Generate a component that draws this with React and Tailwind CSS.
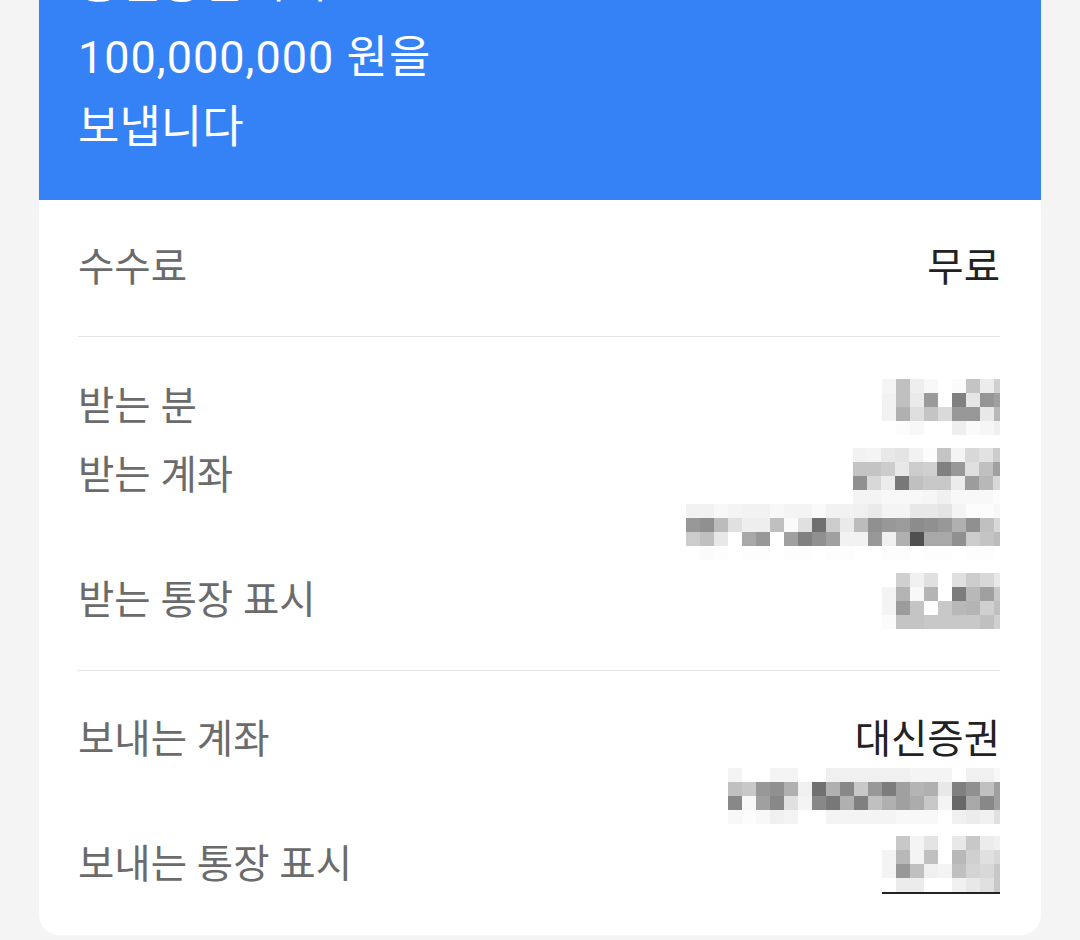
import React from 'react';

// gray values of the privacy mosaics, one string per row of 14px cells
const mosaics = {
  receiverName: {
    width: 118,
    rows: [
      'f5 c0 ee f8 ff fb c4 ec d0',
      'f2 c0 ea 9a ff 80 e6 95 a0',
      'f2 b0 de c4 da 98 98 e8 b8',
      'ff fc f8 ff ff ee fa f6 f0',
    ],
  },
  receiverBank: {
    width: 147,
    rows: [
      'f2 f4 e8 e4 f2 fc c4 f4 d8 e2 cc',
      'c4 c4 cc e8 cc d0 80 98 e0 c0 a0',
      '90 d8 ec 78 c0 c8 c8 ec 9c b8 d8',
      'f4 f4 f8 f8 f8 f6 f0 f8 f8 f8 fc',
    ],
  },
  receiverAccount: {
    width: 314,
    rows: [
      'f2 f2 f8 f4 f2 f2 f8 f4 f4 fa f2 f2 f0 ea f4 f4 e8 e8 e4 f4 fc fc f8',
      '98 90 bc e0 ee ee c0 fa e0 70 cc ea bc 90 98 9c 8c 90 98 b0 90 c0 d8',
      'cc c0 e8 ff a8 98 ff a0 80 90 a0 f2 f2 98 f0 b0 50 a8 a8 90 cc c4 bc',
      'ff fb fd ff fd fd ff fd fd ff fd fd ff ff fd fd ff fd fd ff fd fd ff',
    ],
  },
  receiverMemo: {
    width: 118,
    rows: [
      'ff d0 f0 e0 ff e0 cc d8 e8',
      'f4 b4 f8 b4 ff 7c b8 a0 c8',
      'f4 9c c4 ff c8 b8 b4 d0 c0',
      'fb c4 c4 c8 c8 c8 c8 c0 d0',
    ],
  },
  senderAccount: {
    width: 272,
    rows: [
      'f4 ff ff f4 f4 ff ff f0 f0 f0 f0 f0 f0 f4 f4 f4 ff f0 f0 f8',
      'c0 c8 98 90 b0 f0 70 b0 88 c8 98 7c a0 b4 b0 e8 80 90 c0 a0',
      '88 f8 a0 88 e0 f4 88 78 b0 80 c0 b0 a0 ac c8 f4 68 a8 88 a0',
      'f8 fc f8 f0 f4 ff ff f4 f4 f4 f4 f4 f8 f8 f8 ff f0 ec f0 e0',
    ],
  },
  senderMemo: {
    width: 118,
    rows: [
      'ff c8 f4 e4 ff e8 c8 ec f0',
      'f4 b8 f4 c0 ff b8 d0 e0 d8',
      'f4 98 c0 f0 f4 c0 d4 d8 c8',
      'ff ec ec ff ff f0 e8 e0 c8',
    ],
  },
};

const Mosaic = ({ name, underline }) => {
  const { width, rows } = mosaics[name];
  return (
    <div className="h-[56px] flex items-center justify-end">
      <div
        className={`overflow-hidden ${underline ? 'border-b-2 border-[#222222]' : ''}`}
        style={{ width }}
      >
        {rows.map((row, i) => (
          <div key={i} className="flex">
            {row.split(' ').map((g, j) => (
              <div
                key={j}
                className="w-[14px] h-[14px] shrink-0"
                style={{ backgroundColor: `#${g}${g}${g}` }}
              />
            ))}
          </div>
        ))}
      </div>
    </div>
  );
};

const Row = ({ label, children }) => (
  <div className="flex justify-between items-start">
    <div className="h-[56px] leading-[56px] text-[#6b6b6b]">{label}</div>
    <div className="flex flex-col items-end">{children}</div>
  </div>
);

const Value = ({ children }) => (
  <div className="h-[56px] leading-[56px] text-[#222222]">{children}</div>
);

export default function App() {
  return (
    <div
      className="h-[940px] overflow-hidden bg-[#f4f4f4] px-[39px]"
      style={{ fontFamily: 'Roboto, "Noto Sans CJK KR", sans-serif' }}
    >
      <div className="bg-white rounded-b-[20px] overflow-hidden">
        {/* Header - first line scrolled mostly out of view */}
        <div className="bg-[#3482f6] px-[39px] pb-[37px] text-white text-[45px] leading-[70px]">
          <div className="-mt-[57px] leading-[80px]">홍길동님에게</div>
          <div className="tracking-[1px]">100,000,000 원을</div>
          <div>보냅니다</div>
        </div>

        {/* Details */}
        <div className="pl-[39px] pr-[41px] text-[39.5px]">
          <div className="py-[40px] flex justify-between">
            <div className="leading-[56px] text-[#6b6b6b]">수수료</div>
            <div className="leading-[56px] text-[#222222]">무료</div>
          </div>

          <div className="border-t border-[#e4e4e4] pt-[42px] pb-[41px] flex flex-col gap-[13px]">
            <Row label="받는 분">
              <Mosaic name="receiverName" />
            </Row>
            <Row label="받는 계좌">
              <Mosaic name="receiverBank" />
              <Mosaic name="receiverAccount" />
            </Row>
            <Row label="받는 통장 표시">
              <Mosaic name="receiverMemo" />
            </Row>
          </div>

          <div className="border-t border-[#e4e4e4] pt-[41px] pb-[42px] flex flex-col gap-[13px]">
            <Row label="보내는 계좌">
              <Value>대신증권</Value>
              <Mosaic name="senderAccount" />
            </Row>
            <Row label="보내는 통장 표시">
              <Mosaic name="senderMemo" underline />
            </Row>
          </div>
        </div>
      </div>
    </div>
  );
}
